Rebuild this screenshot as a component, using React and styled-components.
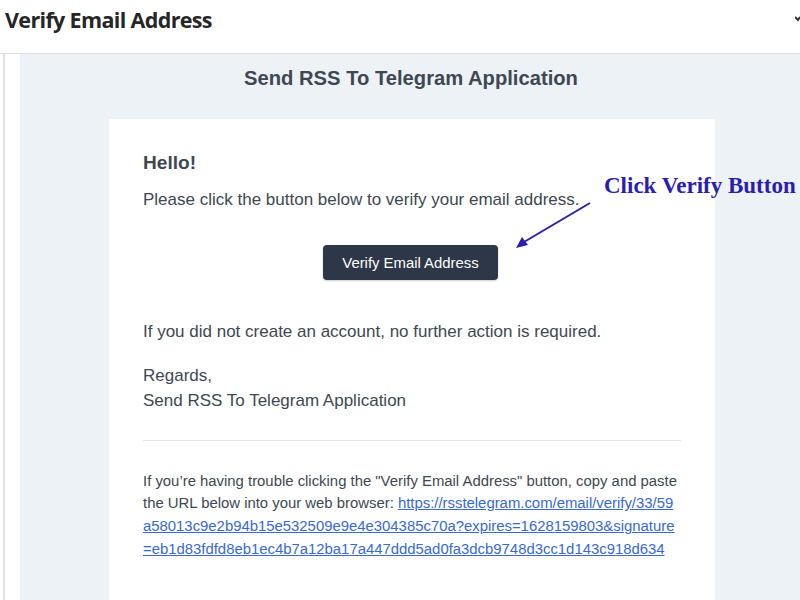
import React from "react";
import styled, { createGlobalStyle } from "styled-components";

const Global = createGlobalStyle`
  html, body { margin: 0; padding: 0; background: #ffffff; }
  body { width: 800px; height: 600px; overflow: hidden; font-family: "Liberation Sans", Arial, sans-serif; }
  * { box-sizing: border-box; }
`;

const Page = styled.div`
  position: relative;
  width: 800px;
  height: 600px;
  display: flex;
  flex-direction: column;
  overflow: hidden;
`;

const Header = styled.header`
  height: 54px;
  flex: none;
  padding: 7px 5px 0;
  border-bottom: 1px solid #dcdde3;
  display: flex;
  justify-content: space-between;
  align-items: flex-start;
`;

const HeaderTitle = styled.h1`
  margin: 0;
  font-family: "Open Sans", "Noto Sans", sans-serif;
  font-weight: 700;
  font-size: 21.5px;
  letter-spacing: -0.65px;
  line-height: 26px;
  color: #262626;
`;

const Body = styled.div`
  flex: 1;
  display: flex;
  min-height: 0;
`;

const Rail = styled.div`
  width: 17px;
  margin-left: 3px;
  border-left: 2px solid #e1e1e7;
  background: #ffffff;
  flex: none;
`;

const Main = styled.main`
  flex: 1;
  background: #edf2f7;
  display: flex;
  flex-direction: column;
  overflow: hidden;
`;

const BrandTitle = styled.div`
  padding: 13px 0 29px 2px;
  text-align: center;
  font-size: 20.2px;
  line-height: 23px;
  font-weight: 700;
  color: #3d4852;
`;

const Card = styled.section`
  width: 606px;
  margin-left: 89px;
  flex: 1;
  background: #ffffff;
  padding: 34px 34px;
  color: #3d4852;
`;

const Greeting = styled.h2`
  margin: 0 0 15px;
  font-size: 19.1px;
  line-height: 19px;
  font-weight: 700;
`;

const Para = styled.p`
  margin: 0 0 ${(p) => p.$mb || 0}px;
  font-size: 17px;
  line-height: 25.5px;
`;

const ButtonRow = styled.div`
  display: flex;
  justify-content: center;
  margin: 32.5px 0 39px;
  padding-right: 3px;
`;

const Button = styled.a`
  display: inline-block;
  background: #2d3748;
  color: #ffffff;
  border-radius: 4px;
  padding: 8.5px 19px;
  font-size: 14.88px;
  line-height: 18px;
  text-decoration: none;
  box-shadow: 0 1px 2px rgba(0, 0, 0, 0.2);
`;

const Divider = styled.hr`
  margin: 26.5px 0 28.5px;
  border: 0;
  border-top: 1px solid #e8e5ef;
`;

const Subcopy = styled.p`
  margin: 0;
  font-size: 14.88px;
  line-height: 22.7px;
  color: #3d4852;
`;

const Link = styled.a`
  color: #3869d4;
  text-decoration: underline;
  word-break: break-all;
`;

const Annotation = styled.div`
  position: absolute;
  left: 604px;
  top: 172px;
  font-family: "Liberation Serif", "Times New Roman", serif;
  font-weight: 700;
  font-size: 23px;
  line-height: 28px;
  color: #2b1eae;
  white-space: nowrap;
`;

const ArrowSvg = styled.svg`
  position: absolute;
  left: 510px;
  top: 198px;
`;

const Corner = styled.svg`
  position: absolute;
  left: 795px;
  top: 14px;
`;

export default function App() {
  return (
    <Page>
      <Global />
      <Header>
        <HeaderTitle>Verify Email Address</HeaderTitle>
      </Header>
      <Body>
        <Rail />
        <Main>
          <BrandTitle>Send RSS To Telegram Application</BrandTitle>
          <Card>
            <Greeting>Hello!</Greeting>
            <Para>Please click the button below to verify your email address.</Para>
            <ButtonRow>
              <Button href="#">Verify Email Address</Button>
            </ButtonRow>
            <Para $mb={18}>If you did not create an account, no further action is required.</Para>
            <Para>
              Regards,
              <br />
              Send RSS To Telegram Application
            </Para>
            <Divider />
            <Subcopy>
              If you’re having trouble clicking the "Verify Email Address" button, copy and paste the URL below into your web browser:{" "}
              <Link href="#">
                https://rsstelegram.com/email/verify/33/59a58013c9e2b94b15e532509e9e4e304385c70a?expires=1628159803&amp;signature=eb1d83fdfd8eb1ec4b7a12ba17a447ddd5ad0fa3dcb9748d3cc1d143c918d634
              </Link>
            </Subcopy>
          </Card>
        </Main>
      </Body>
      <Annotation>Click Verify Button</Annotation>
      <ArrowSvg width="84" height="56" viewBox="0 0 84 56">
        <line x1="80" y1="5" x2="14" y2="44" stroke="#2b1eae" strokeWidth="2" />
        <polygon points="6,50 12,39 18,47" fill="#2b1eae" />
      </ArrowSvg>
      <Corner width="5" height="8" viewBox="0 0 5 8">
        <path d="M0 3 L3 6 L5 3" stroke="#333" strokeWidth="2" fill="none" />
      </Corner>
    </Page>
  );
}
